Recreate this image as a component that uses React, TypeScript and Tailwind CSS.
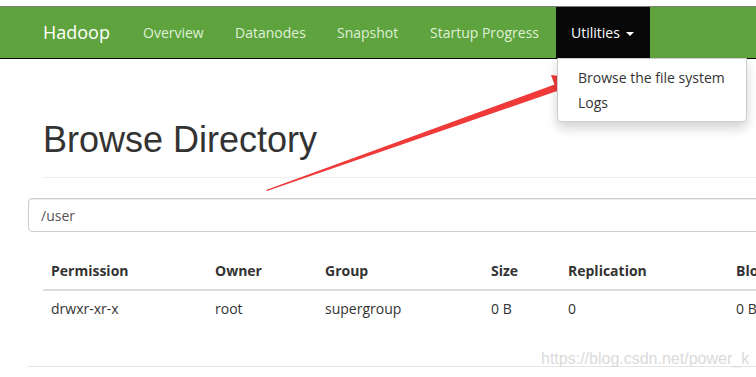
const NAV_LINKS = [
  { label: "Overview", w: "w-[92px]" },
  { label: "Datanodes", w: "w-[102px]" },
  { label: "Snapshot", w: "w-[93px]" },
  { label: "Startup Progress", w: "w-[141px]" },
];

const COLUMNS = [
  { label: "Permission", value: "drwxr-xr-x", w: "w-[164px]" },
  { label: "Owner", value: "root", w: "w-[110px]" },
  { label: "Group", value: "supergroup", w: "w-[166px]" },
  { label: "Size", value: "0 B", w: "w-[77px]" },
  { label: "Replication", value: "0", w: "w-[168px]" },
  { label: "Block Size", value: "0 B", w: "w-[120px]" },
];

export default function App() {
  return (
    <div className="relative w-[756px] h-[377px] overflow-hidden bg-white font-['Open_Sans',sans-serif] text-[14px] text-[#333]">
      {/* Navbar */}
      <div className="pt-[6px]">
        <div className="h-[53px] bg-[#5fa33e] border-t border-t-[#7d7d7d] border-b border-b-[#080808] flex pl-[28px]">
          <div className="w-[100px] pl-[15px] flex items-center text-[18px] text-white">Hadoop</div>
          {NAV_LINKS.map((l) => (
            <div key={l.label} className={`${l.w} pl-[15px] flex items-center text-[#dff0d8] whitespace-nowrap`}>
              {l.label}
            </div>
          ))}
          <div className="relative w-[94px] pl-[15px] flex items-center bg-[#080808] text-white">
            Utilities
            <span className="ml-[6px] mt-[2px] border-x-[4px] border-x-transparent border-t-[4px] border-t-white" />
            {/* Dropdown */}
            <div className="absolute left-px top-[51px] w-[190px] bg-white border border-[#ccc] rounded-b-[4px] shadow-[0_6px_12px_rgba(0,0,0,0.175)] pt-[6px] pb-[6px] z-10">
              <div className="px-[20px] leading-[25px] text-[#333] whitespace-nowrap">Browse the file system</div>
              <div className="px-[20px] leading-[25px] text-[#333]">Logs</div>
            </div>
          </div>
        </div>
      </div>

      {/* Body */}
      <div className="pl-[28px]">
        <div className="pl-[15px]">
          <h1 className="mt-[61px] font-['Liberation_Sans',sans-serif] text-[36px] leading-[40px] text-[#333]">Browse Directory</h1>
          <div className="mt-[17px] border-t border-[#eee]" />
        </div>
        <div className="mt-[20px] w-[760px] h-[34px] border border-[#ccc] rounded-[4px] flex items-center pl-[12px] text-[#555] shadow-[inset_0_1px_1px_rgba(0,0,0,0.075)]">
          /user
        </div>
        <div className="pl-[15px] mt-[21px]">
          <div className="flex border-b-2 border-[#ddd] font-bold">
            {COLUMNS.map((c) => (
              <div key={c.label} className={`${c.w} shrink-0 p-[8px] leading-[20px] whitespace-nowrap`}>
                {c.label}
              </div>
            ))}
          </div>
          <div className="flex">
            {COLUMNS.map((c) => (
              <div key={c.label} className={`${c.w} shrink-0 p-[8px] leading-[20px] whitespace-nowrap`}>
                {c.value}
              </div>
            ))}
          </div>
        </div>
        <div className="mt-[39px] border-t border-[#e5e5e5]" />
      </div>

      {/* Annotation arrow */}
      <svg className="absolute left-0 top-0 pointer-events-none" width="756" height="377">
        <polygon points="266,190 556,84 560,90 267,191" fill="#f03a3a" />
        <polygon points="576,78 551,75 558,94" fill="#f03a3a" />
      </svg>

      {/* Watermark */}
      <div className="absolute left-[541px] top-[347px] font-['Liberation_Sans',sans-serif] text-[16px] text-[#dadada] whitespace-nowrap">
        https://blog.csdn.net/power_k
      </div>
    </div>
  );
}
